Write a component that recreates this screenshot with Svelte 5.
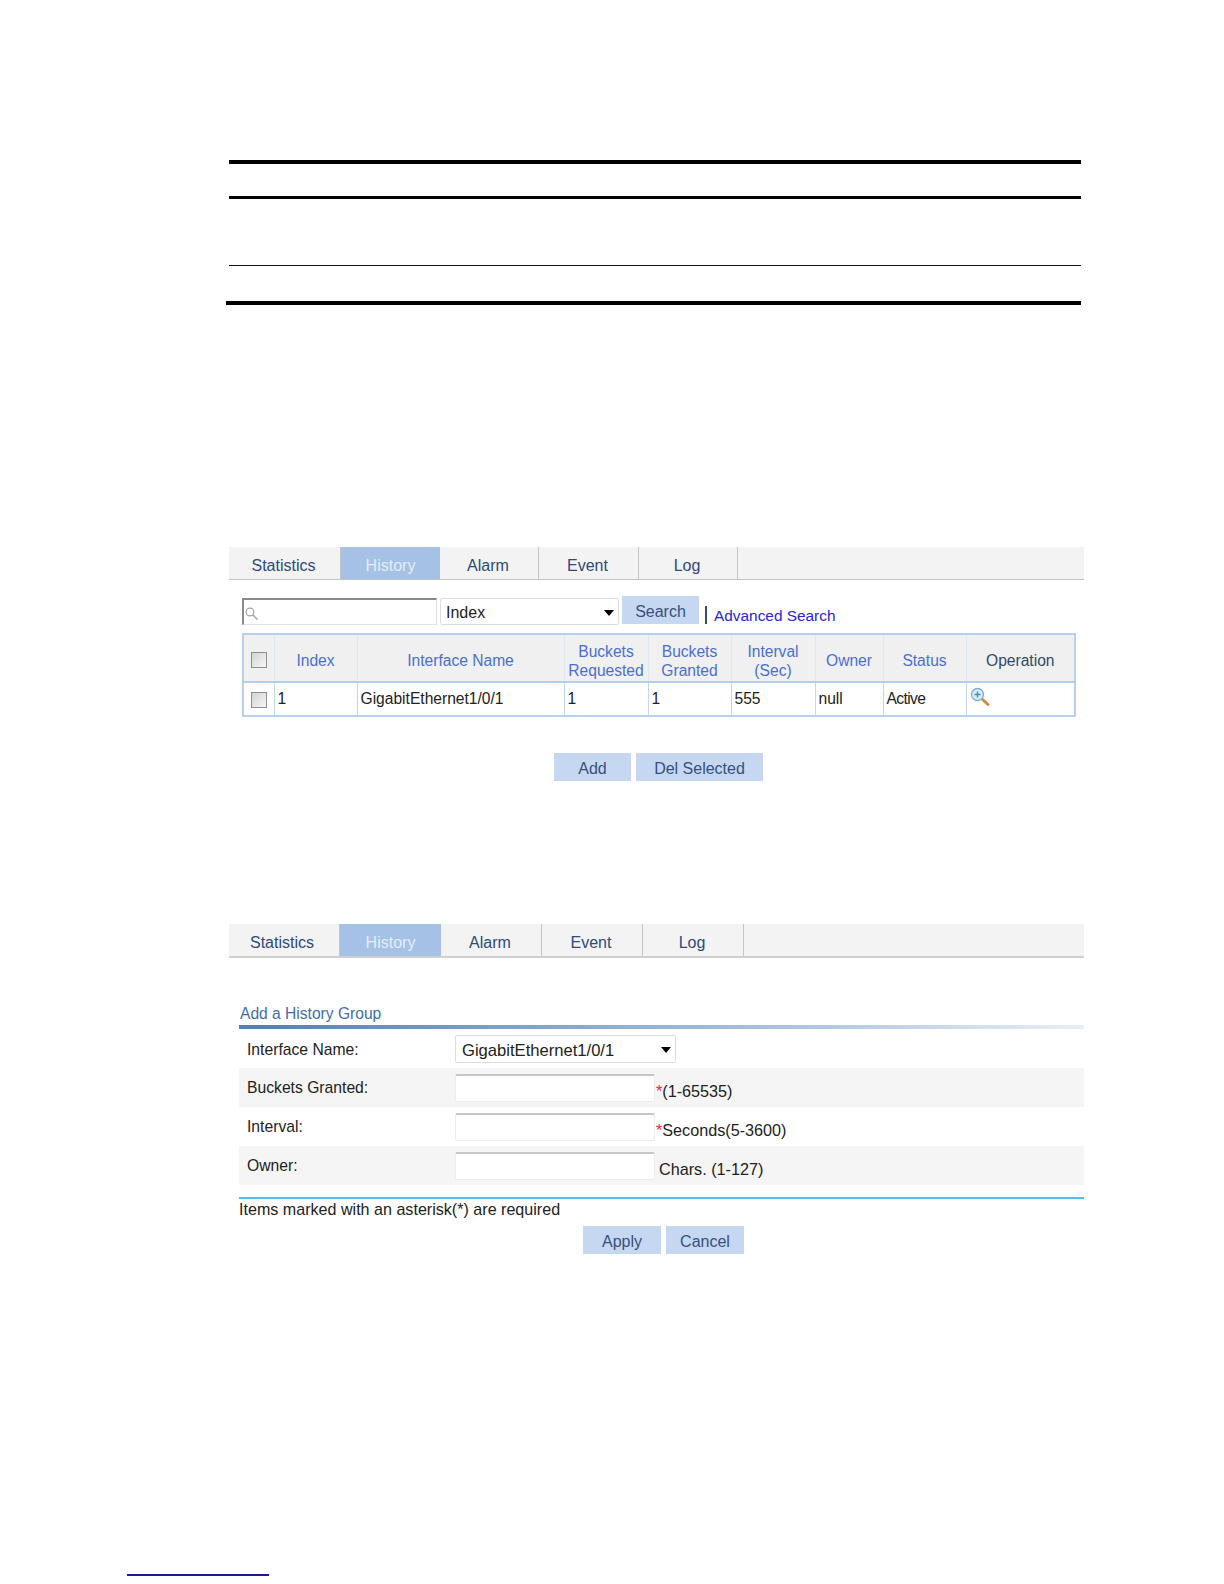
<script>
    const tabs = ['Statistics', 'History', 'Alarm', 'Event', 'Log'];
    const tabWidthsA = [112, 99, 99, 100, 99];
    const tabWidthsB = [111, 101, 101, 101, 101];

    const columns = [
        { label: 'Index', width: 83 },
        { label: 'Interface Name', width: 207 },
        { label: 'Buckets Requested', width: 84 },
        { label: 'Buckets Granted', width: 83 },
        { label: 'Interval (Sec)', width: 84 },
        { label: 'Owner', width: 68 },
        { label: 'Status', width: 83 },
    ];
    const row = ['1', 'GigabitEthernet1/0/1', '1', '1', '555', 'null', 'Active'];

    const fields = [
        { label: 'Buckets Granted:', hint: '(1-65535)', required: true },
        { label: 'Interval:', hint: 'Seconds(5-3600)', required: true },
        { label: 'Owner:', hint: 'Chars. (1-127)', required: false },
    ];
</script>

{#snippet tabbar(widths)}
    <nav class="tabs">
        {#each tabs as tab, i}
            <a href="#{tab}" class="tab" class:active={tab === 'History'} style="width: {widths[i]}px">{tab}</a>
        {/each}
    </nav>
{/snippet}

<main class="page">
    <div class="spec">
        <div class="spec-head"></div>
        <div class="spec-row"></div>
        <div class="spec-row last"></div>
    </div>

    <section class="list-panel">
        {@render tabbar(tabWidthsA)}

        <div class="search">
            <span class="search-box">
                <svg viewBox="0 0 12 12" width="13" height="13" aria-hidden="true">
                    <circle cx="4.6" cy="4.6" r="3.6" fill="none" stroke="#a3a3a3" stroke-width="1.1" />
                    <path d="M7.2 7.2 11.5 11.5" stroke="#a3a3a3" stroke-width="1.4" />
                </svg>
                <input type="text" aria-label="Search" />
            </span>
            <span class="select search-field">
                <select aria-label="Search field"><option>Index</option></select>
            </span>
            <button class="btn search-btn" type="button">Search</button>
            <span class="divider"></span>
            <a class="advanced" href="#advanced">Advanced Search</a>
        </div>

        <table>
            <thead>
                <tr>
                    <th class="check"><input type="checkbox" aria-label="Select all" /></th>
                    {#each columns as col}
                        <th style="width: {col.width}px"><a href="#{col.label}">{col.label}</a></th>
                    {/each}
                    <th class="plain">Operation</th>
                </tr>
            </thead>
            <tbody>
                <tr>
                    <td class="check"><input type="checkbox" aria-label="Select row" /></td>
                    {#each row as cell}
                        <td class:tight={cell === 'Active'}>{cell}</td>
                    {/each}
                    <td class="op">
                        <svg viewBox="0 0 20 20" width="20" height="20" aria-hidden="true">
                            <path d="M11.5 11.5 18 17.5" stroke="#d28a3c" stroke-width="3" stroke-linecap="round" />
                            <circle cx="7.5" cy="7.5" r="6" fill="#d5ecf6" stroke="#7fb0cf" stroke-width="1.3" />
                            <path d="M7.5 4.5v6M4.5 7.5h6" stroke="#3f8fbe" stroke-width="1.4" />
                        </svg>
                    </td>
                </tr>
            </tbody>
        </table>

        <div class="actions list-actions">
            <button class="btn add" type="button">Add</button>
            <button class="btn del" type="button">Del Selected</button>
        </div>
    </section>

    <section class="form-panel">
        {@render tabbar(tabWidthsB)}

        <form class="form">
            <h2>Add a History Group</h2>
            <div class="form-row first">
                <span class="label">Interface Name:</span>
                <span class="select iface">
                    <select aria-label="Interface Name"><option>GigabitEthernet1/0/1</option></select>
                </span>
            </div>
            {#each fields as field, i}
                <div class="form-row" class:shaded={i !== 1}>
                    <span class="label">{field.label}</span>
                    <input class="field" type="text" aria-label={field.label} />
                    <span class="hint" class:pad={!field.required}>{#if field.required}<b>*</b>{/if}{field.hint}</span>
                </div>
            {/each}
            <p class="note">Items marked with an asterisk(*) are required</p>
            <div class="actions form-actions">
                <button class="btn apply" type="button">Apply</button>
                <button class="btn cancel" type="button">Cancel</button>
            </div>
        </form>
    </section>

    <div class="footnote-rule"></div>
</main>

<style>
    :global(body) {
        background: #fff;
    }

    .page {
        height: 1584px;
        box-sizing: border-box;
        padding-top: 160px;
        font-family: "Liberation Sans", Arial, sans-serif;
        font-size: 16px;
        color: #222;
        overflow: hidden;
    }

    /* empty rule-only table from the document page */
    .spec {
        width: 855px;
        margin-left: 226px;
    }
    .spec-head {
        height: 32px;
        margin-left: 3px;
        border-top: 4px solid #000;
        border-bottom: 3px solid #000;
    }
    .spec-row {
        height: 66px;
        margin-left: 3px;
        border-bottom: 1px solid #111;
    }
    .spec-row.last {
        height: 35px;
        margin-left: 0;
        border-bottom: 4px solid #000;
    }

    .list-panel,
    .form-panel {
        width: 855px;
        margin-left: 229px;
    }
    .list-panel {
        margin-top: 242px;
    }
    .form-panel {
        margin-top: 143px;
    }

    .tabs {
        display: flex;
        height: 32px;
        background: #f3f3f3;
        border-bottom: 1px solid #c4c4c4;
    }
    .form-panel .tabs {
        border-bottom-width: 2px;
        border-bottom-color: #cfcfcf;
    }
    .tab {
        box-sizing: border-box;
        display: flex;
        align-items: center;
        justify-content: center;
        padding: 5px 2px 0 0;
        border-right: 1px solid #c6c6c6;
        color: #2f4a7c;
        text-decoration: none;
    }
    .form-panel .tab:first-child {
        padding-right: 4px;
    }
    .tab.active {
        padding-right: 0;
        background: #a5c1e6;
        color: #e4edf8;
        border-right: none;
    }

    .search {
        display: flex;
        align-items: flex-start;
        height: 28px;
        margin: 16px 0 9px 13px;
    }
    .search-box {
        box-sizing: border-box;
        display: flex;
        align-items: center;
        gap: 2px;
        width: 195px;
        height: 27px;
        margin-top: 2px;
        padding: 3px 0 0 1px;
        border: 1px solid #e2e2e2;
        border-top: 2px solid #8a8a8a;
        border-left: 2px solid #8a8a8a;
    }
    .search-box input {
        flex: 1;
        min-width: 0;
        border: none;
        outline: none;
        background: transparent;
    }

    .select {
        position: relative;
        display: block;
        box-sizing: border-box;
    }
    .select select {
        appearance: none;
        box-sizing: border-box;
        display: block;
        width: 100%;
        height: 100%;
        padding: 2px 0 0 5px;
        border: 1px solid #dcdcdc;
        border-radius: 2px;
        background: #fff;
        font: inherit;
        color: #222;
    }
    .select::after {
        content: '';
        position: absolute;
        right: 5px;
        top: 50%;
        margin-top: -2px;
        border: 5px solid transparent;
        border-top: 6px solid #000;
        border-bottom: none;
    }
    .search-field {
        width: 179px;
        height: 27px;
        margin: 2px 0 0 3px;
    }

    .btn {
        box-sizing: border-box;
        height: 28px;
        padding: 3px 0 0;
        border: none;
        background: #c5d7f1;
        font: inherit;
        color: #35517f;
    }
    .search-btn {
        width: 77px;
        margin-left: 3px;
    }
    .divider {
        width: 2px;
        height: 18px;
        margin: 10px 0 0 6px;
        background: #3a4a6a;
    }
    .advanced {
        margin: 10px 0 0 7px;
        color: #2b23d6;
        font-size: 15.4px;
        text-decoration: none;
        line-height: 20px;
    }

    table {
        box-sizing: border-box;
        width: 834px;
        margin-left: 13px;
        border-collapse: collapse;
        table-layout: fixed;
        border: 2px solid #b7d0ec;
    }
    th, td {
        box-sizing: border-box;
        padding: 0;
        font-size: 15.6px;
        font-weight: normal;
    }
    th {
        height: 48px;
        padding-top: 5px;
        border: 1px solid #dde6f1;
        border-bottom: 2px solid #b4cde9;
        background: #f0f0f0;
        line-height: 19px;
        text-align: center;
    }
    th a {
        color: #4a6fd0;
        text-decoration: none;
    }
    th.plain {
        color: #2f4a6c;
    }
    td {
        height: 34px;
        padding: 0 0 1px 3px;
        border: 1px solid #c3d6ec;
        color: #222;
    }
    td.tight {
        letter-spacing: -0.6px;
    }
    .check {
        width: 31px;
        text-align: center;
    }
    th.check {
        padding: 4px 0 0;
    }
    td.check {
        padding: 1px 0 0;
    }
    .check input {
        appearance: none;
        display: block;
        box-sizing: border-box;
        width: 16px;
        height: 16px;
        margin: 0 auto;
        border: 1px solid #8e8e8e;
        background: linear-gradient(135deg, #d4d4d4, #f6f6f6);
    }
    td.op {
        padding: 0 0 0 3px;
    }
    td.op svg {
        display: block;
        margin-bottom: 4px;
    }

    .actions {
        display: flex;
        gap: 5px;
    }
    .list-actions {
        margin: 36px 0 0 325px;
    }
    .add { width: 77px; }
    .del { width: 127px; }

    .form {
        margin: 0;
        padding: 45px 0 0 10px;
    }
    h2 {
        margin: 0 0 0 1px;
        height: 22px;
        font-size: 15.6px;
        font-weight: normal;
        line-height: 22px;
        color: #3f6ea8;
    }
    .form-row {
        display: grid;
        grid-template-columns: 216px 200px 1fr;
        align-items: center;
        height: 39px;
    }
    .form-row.first {
        border-top: 4px solid;
        border-image: linear-gradient(to right, #4f7fb5, #b3c9e2 70%, #e8eef6) 1;
    }
    .form-row.shaded {
        background: #f5f5f5;
    }
    .label {
        padding: 1px 0 0 8px;
        font-size: 15.7px;
        color: #222;
    }
    .form-row.first .label {
        padding-top: 3px;
    }
    .iface {
        width: 221px;
        height: 28px;
        font-size: 16.6px;
    }
    .iface select {
        padding: 3px 0 0 6px;
    }
    .field {
        box-sizing: border-box;
        width: 200px;
        height: 28px;
        border: 1px solid #ececec;
        border-top: 2px solid #c6c6c6;
        border-radius: 2px;
        background: #fff;
        outline: none;
    }
    .hint {
        padding-top: 7px;
        font-size: 16.2px;
        color: #222;
    }
    .hint b {
        padding-left: 1px;
        font-weight: normal;
        color: #e8263c;
    }
    .hint.pad {
        padding-left: 4px;
    }
    .note {
        margin: 12px 0 0;
        height: 25px;
        border-top: 2px solid #4fc0ec;
        font-size: 16.1px;
        line-height: 21px;
    }
    .form-actions {
        margin-left: 344px;
        margin-top: 2px;
    }
    .apply { width: 78px; }
    .cancel { width: 78px; }

    .footnote-rule {
        width: 142px;
        height: 2px;
        margin: 320px 0 0 127px;
        background: #1a1a8c;
    }
</style>
